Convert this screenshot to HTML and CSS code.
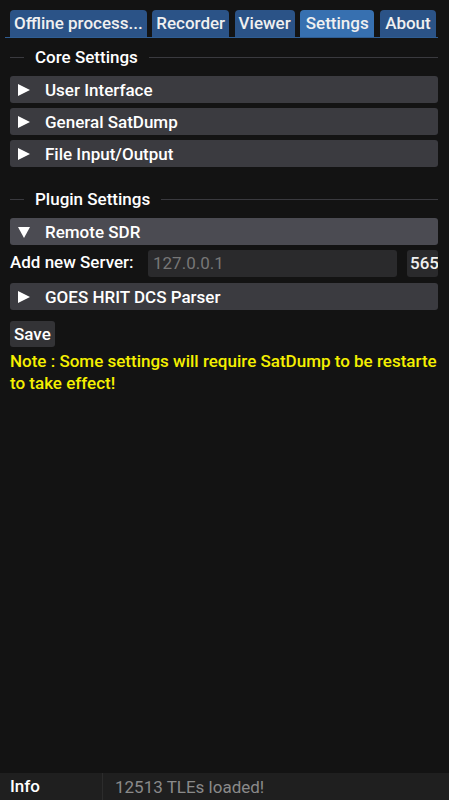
FILE: index.html
```html
<!DOCTYPE html>
<html>
<head>
<meta charset="utf-8">
<link rel="stylesheet" href="styles.css">
</head>
<body>
<div class="app">
  <div class="tabs">
    <div class="tab">Offline process...</div>
    <div class="tab">Recorder</div>
    <div class="tab">Viewer</div>
    <div class="tab wide active">Settings</div>
    <div class="tab wide">About</div>
  </div>
  <div class="content">
    <div class="sep"><span class="line short"></span><span class="sep-text">Core Settings</span><span class="line"></span></div>
    <div class="header"><svg class="arrow" viewBox="0 0 12 12"><path d="M0 0 L12 6 L0 12 Z" fill="#fff"/></svg><span>User Interface</span></div>
    <div class="header"><svg class="arrow" viewBox="0 0 12 12"><path d="M0 0 L12 6 L0 12 Z" fill="#fff"/></svg><span>General SatDump</span></div>
    <div class="header"><svg class="arrow" viewBox="0 0 12 12"><path d="M0 0 L12 6 L0 12 Z" fill="#fff"/></svg><span>File Input/Output</span></div>
    <div class="spacer"></div>
    <div class="sep"><span class="line short"></span><span class="sep-text">Plugin Settings</span><span class="line"></span></div>
    <div class="header open"><svg class="arrow" viewBox="0 0 12 12"><path d="M0 1 L12 1 L6 12 Z" fill="#fff"/></svg><span>Remote SDR</span></div>
    <div class="server-row">
      <span class="label">Add new Server:</span>
      <div class="input ip">127.0.0.1</div>
      <div class="input port">565</div>
    </div>
    <div class="header"><svg class="arrow" viewBox="0 0 12 12"><path d="M0 0 L12 6 L0 12 Z" fill="#fff"/></svg><span>GOES HRIT DCS Parser</span></div>
    <div class="save-row"><div class="btn">Save</div></div>
    <div class="note">Note : Some settings will require SatDump to be restarte<br>to take effect!</div>
  </div>
  <div class="status">
    <div class="status-label">Info</div>
    <div class="status-msg">12513 TLEs loaded!</div>
  </div>
</div>
</body>
</html>
```
FILE: styles.css
```css
html, body {
  margin: 0;
  padding: 0;
  background: #131313;
  font-family: Roboto, "Noto Sans", sans-serif;
  font-size: 17px;
  font-weight: 500;
  color: #fff;
  overflow: hidden;
}
.app {
  width: 449px;
  height: 800px;
  display: flex;
  flex-direction: column;
}
.tabs {
  display: flex;
  gap: 5.5px;
  margin: 10px 11px 0 5px;
  padding-left: 5px;
  border-bottom: 1px solid #2f5d92;
  height: 27px;
  overflow: hidden;
}
.tab {
  background: #2b5387;
  border-radius: 4px 4px 0 0;
  padding: 0 4px;
  height: 27px;
  line-height: 27px;
  white-space: nowrap;
  color: #f0f0f0;
}
.tab.wide {
  padding: 0 5.5px;
}
.tab.active {
  background: #3770b0;
}
.content {
  flex: 1;
  padding: 0 11px 0 10px;
  display: flex;
  flex-direction: column;
  overflow: hidden;
}
.sep {
  display: flex;
  align-items: center;
  height: 20px;
  margin-top: 9px;
  margin-bottom: 9px;
  flex: none;
}
.line {
  flex: 1;
  height: 1px;
  background: #3a3a3f;
}
.line.short {
  flex: 0 0 14px;
}
.sep-text {
  padding: 0 11px;
  white-space: nowrap;
}
.header {
  height: 27px;
  background: #3b3b40;
  border-radius: 3px;
  display: flex;
  align-items: center;
  margin-bottom: 5px;
  flex: none;
}
.header.open {
  background: #4b4b52;
}
.arrow {
  width: 12px;
  height: 12px;
  margin-left: 8px;
  margin-right: 15px;
}
.spacer {
  height: 8px;
  flex: none;
}
.server-row {
  display: flex;
  align-items: center;
  height: 27px;
  margin: 0 0 6px 0;
  flex: none;
}
.label {
  width: 138px;
  flex: none;
  white-space: nowrap;
  position: relative;
  top: -2px;
}
.input {
  background: #2a2a2c;
  border-radius: 3px;
  height: 27px;
  line-height: 27px;
  box-sizing: border-box;
  padding-left: 5px;
}
.ip {
  width: 249px;
  flex: none;
  color: #777;
  font-weight: 400;
}
.port {
  margin-left: 10px;
  flex: 1;
  overflow: hidden;
  white-space: nowrap;
  padding-left: 3px;
  color: #f0f0f0;
}
.save-row {
  display: flex;
  margin-top: 6px;
  flex: none;
}
.btn {
  background: #333336;
  border-radius: 3px;
  height: 26px;
  line-height: 26px;
  padding: 0 4px;
}
.note {
  color: #f5f000;
  margin-top: 3px;
  line-height: 22px;
  white-space: nowrap;
}
.status {
  height: 27px;
  background: #1f1f1f;
  display: flex;
  align-items: center;
  flex: none;
}
.status-label {
  width: 92px;
  padding-left: 10px;
  height: 27px;
  line-height: 27px;
  border-right: 1px solid #2c2c2c;
}
.status-msg {
  padding-left: 12px;
  color: #8a8a8a;
  font-weight: 400;
}
```
